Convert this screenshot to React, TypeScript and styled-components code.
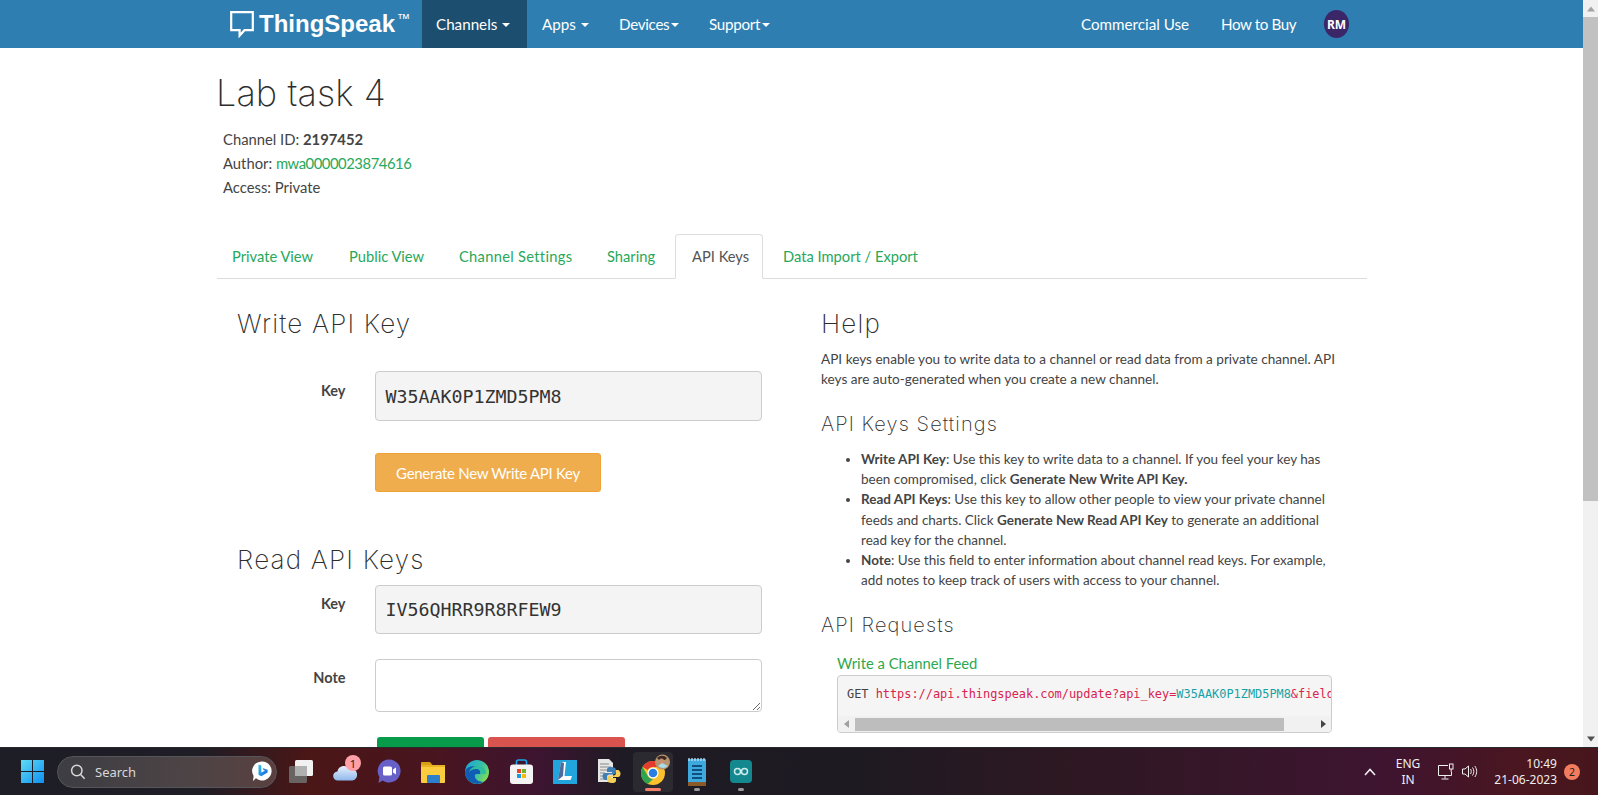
import React from "react";
import styled, { createGlobalStyle } from "styled-components";

const Global = createGlobalStyle`
  html, body { margin: 0; padding: 0; height: 100%; overflow: hidden; background: #fff; }
  body { font-family: "Lato", "Noto Sans", sans-serif; color: #444; }
  #root { height: 100%; }
  * { box-sizing: border-box; }
`;

const Screen = styled.div`
  width: 1598px; height: 795px; display: flex; flex-direction: column; overflow: hidden;
`;
const Viewport = styled.div`
  height: 747px; display: flex; flex: none; overflow: hidden;
`;
const Page = styled.div`
  flex: 1; min-width: 0; overflow: hidden; display: flex; flex-direction: column;
`;
const ScrollTrack = styled.div`
  width: 15px; flex: none; background: #f1f1f1; display: flex; flex-direction: column;
  align-items: stretch;
`;
const ScrollArrow = styled.div`
  height: 17px; flex: none; display: flex; align-items: center; justify-content: center;
`;
const ScrollThumb = styled.div`
  height: 484px; flex: none; background: #c1c1c1;
`;
const ScrollGap = styled.div` flex: 1; `;

const Navbar = styled.nav`
  height: 48px; flex: none; background: #2e7eb2; display: flex; align-items: stretch;
  padding-left: 230px; color: #fff;
`;
const Brand = styled.div`
  width: 192px; display: flex; align-items: center; gap: 5px; flex: none;
`;
const BrandText = styled.span`
  font-family: "Liberation Sans", Arial, sans-serif; font-weight: 700; font-size: 24px; color: #fff;
  white-space: nowrap;
`;
const Tm = styled.sup`
  font-size: 13px; font-weight: 400; vertical-align: 9px; line-height: 0; margin-left: 2px;
`;
const NavItem = styled.div<{ $w: number; $active?: boolean; $tight?: boolean }>`
  width: ${(p) => p.$w}px; flex: none; padding-left: ${(p) => (p.$active ? 14 : 15)}px;
  display: flex; align-items: center; gap: ${(p) => (p.$tight ? 2 : 5)}px; font-size: 15.2px; color: #fff;
  letter-spacing: ${(p) => (p.$tight ? "-0.3px" : "0")};
  background: ${(p) => (p.$active ? "#1c4e6f" : "transparent")};
`;
const NavCaret = styled.i`
  width: 0; height: 0; border-left: 4.5px solid transparent; border-right: 4.5px solid transparent;
  border-top: 4.5px solid #fff; display: block; margin-top: 1px;
`;
const NavSpacer = styled.div` flex: 1; `;
const NavLink = styled.div<{ $w: number; $tight?: boolean }>`
  width: ${(p) => p.$w}px; flex: none; display: flex; align-items: center; font-size: 15.2px; color: #fff;
  letter-spacing: ${(p) => (p.$tight ? "-0.4px" : "0")};
`;
const Avatar = styled.div`
  width: 25px; height: 28px; border-radius: 50%; background: #3b2667; color: #fff; flex: none;
  font: 700 12px "Noto Sans", sans-serif; display: flex; align-items: center; justify-content: center;
  align-self: center; margin-right: 234px;
`;

const Body = styled.main`
  padding-left: 217px; width: 1367px;
`;
const Title = styled.h1`
  margin: 20px 0 0 -1px; height: 50px; line-height: 50px; font-family: "Inter", sans-serif;
  font-weight: 200; font-size: 36px; color: #2e2e2e; letter-spacing: 0.1px;
`;
const Meta = styled.div`
  margin-top: 9px; padding-left: 6px; font-size: 14.8px; color: #444; line-height: 24px;
`;
const MetaLine = styled.div` height: 24px; `;
const GreenLink = styled.a`
  color: #27a85a; text-decoration: none; letter-spacing: -0.45px;
`;
const Tabs = styled.div`
  margin-top: 35px; height: 45px; display: flex; border-bottom: 1px solid #ddd; align-items: stretch;
`;
const Tab = styled.div<{ $w: number; $pad?: number; $active?: boolean; $wide?: boolean }>`
  width: ${(p) => p.$w}px; flex: none; height: 45px; padding-left: ${(p) => p.$pad ?? 15}px; font-size: 14.7px;
  padding-bottom: 1px; white-space: nowrap; letter-spacing: ${(p) => (p.$wide ? "0.3px" : "0")};
  display: flex; align-items: center;
  color: ${(p) => (p.$active ? "#555" : "#27a85a")};
  ${(p) =>
    p.$active
      ? "background:#fff;border:1px solid #ddd;border-bottom-color:#fff;border-radius:4px 4px 0 0;"
      : ""}
`;
const Columns = styled.div`
  display: grid; grid-template-columns: 604px 546px;
`;
const LeftCol = styled.section` padding-left: 20px; `;
const RightCol = styled.section``;
const H2 = styled.h2<{ $top: number }>`
  margin: ${(p) => p.$top}px 0 0; height: 40px; line-height: 40px; font-family: "Inter", sans-serif;
  font-weight: 200; font-size: 26px; color: #2e2e2e; letter-spacing: 1.2px;
`;
const FormRow = styled.div<{ $top: number }>`
  margin-top: ${(p) => p.$top}px; display: grid; grid-template-columns: 108.5px 538px; column-gap: 29px;
  width: 676px;
`;
const Label = styled.label<{ $pad: number }>`
  text-align: right; font-weight: 700; font-size: 14.5px; line-height: 24px; color: #444;
  padding-top: ${(p) => p.$pad}px;
`;
const KeyField = styled.div<{ $h: number }>`
  width: 387px; height: ${(p) => p.$h}px; border: 1px solid #ccc; border-radius: 4px; background: #f4f4f4;
  font-family: "DejaVu Sans Mono", monospace; font-size: 18.3px; color: #333;
  display: flex; align-items: center; padding-left: 10px;
`;
const NoteField = styled.textarea`
  width: 387px; height: 53px; border: 1px solid #ccc; border-radius: 4px; background: #fff; display: block;
  margin: 0; font-family: inherit;
`;
const ButtonRow = styled.div<{ $top: number; $left: number }>`
  margin-top: ${(p) => p.$top}px; margin-left: ${(p) => p.$left}px; display: flex; gap: 4px;
`;
const GenButton = styled.div`
  width: 226px; height: 39px; background: #f0ad4e; border: 1px solid #eea236; border-radius: 3px;
  color: #fff; font-size: 15px; display: flex; align-items: center; justify-content: center;
  letter-spacing: -0.3px;
`;
const ColorButton = styled.div<{ $w: number; $bg: string }>`
  width: ${(p) => p.$w}px; height: 40px; background: ${(p) => p.$bg}; border-radius: 3px;
`;
const HelpP = styled.p`
  margin: 5px 0 0; font-size: 13.6px; line-height: 20px; white-space: nowrap; color: #444;
`;
const H3 = styled.h3<{ $top: number }>`
  margin: ${(p) => p.$top}px 0 0; height: 30px; line-height: 30px; font-family: "Inter", sans-serif;
  font-weight: 200; font-size: 20px; color: #2e2e2e; letter-spacing: 1.1px;
`;
const HelpList = styled.ul`
  margin: 10px 0 0; padding: 0 0 0 40px; font-size: 13.5px; line-height: 20.2px; white-space: nowrap; color: #444;
`;
const FeedTitle = styled.div`
  margin: 12px 0 0 16px; font-size: 14.8px; line-height: 22px; height: 22px; color: #2ea84f;
`;
const CodeBox = styled.div`
  margin: 1px 0 0 16px; width: 495px; height: 58px; border: 1px solid #ccc; border-radius: 4px;
  background: #f5f5f5; display: flex; flex-direction: column; overflow: hidden;
`;
const CodeText = styled.pre`
  margin: 0; flex: 1; overflow: hidden; padding: 8px 0 0 9px; font-family: "DejaVu Sans Mono", monospace;
  font-size: 11.9px; line-height: 20px; color: #444; white-space: pre;
`;
const CodeUrl = styled.span` color: #d9224c; `;
const CodeKey = styled.span` color: #16a3a8; `;
const CodeScroll = styled.div`
  height: 16px; flex: none; background: #f1f1f1; display: flex; align-items: center;
`;
const CodeArrow = styled.div`
  width: 17px; flex: none; display: flex; align-items: center; justify-content: center;
`;
const CodeThumb = styled.div` width: 429px; height: 13px; background: #bdbdbd; flex: none; `;
const CodeGap = styled.div` flex: 1; `;

const Taskbar = styled.footer`
  height: 48px; flex: none; display: flex; align-items: center; position: relative;
  border-top: 1px solid #2a2a2e; color: #fff;
  background: linear-gradient(90deg, #1e1e26 0, #1f1d25 200px, #4b1616 310px, #481520 440px, #3d1430 540px, #1f1b24 620px, #1e1a22 860px, #2d1822 1060px, #3e1430 1380px, #4a1620 1520px, #47161c 1598px);
`;
const StartButton = styled.div`
  width: 57px; flex: none; display: flex; justify-content: center; padding-left: 8px;
`;
const SearchBox = styled.div`
  width: 220px; height: 32px; flex: none; border-radius: 16px; display: flex; align-items: center;
  background: linear-gradient(90deg, #3d3d43, #4d4446 60%, #5a403f);
  padding: 0 4px 0 12px; gap: 9px; border: 1px solid #55555a;
`;
const SearchLabel = styled.span`
  font: 400 13px "Noto Sans", sans-serif; color: #d8d8d8; flex: 1;
`;
const Apps = styled.div`
  display: flex; margin-left: 2px; flex: none; height: 47px;
`;
const Slot = styled.div<{ $active?: boolean }>`
  width: 44px; flex: none; position: relative; display: flex; align-items: center; justify-content: center;
  &::before {
    content: "";
    display: ${(p) => (p.$active ? "block" : "none")};
    position: absolute; left: 2px; top: 4px; width: 40px; height: 40px; border-radius: 4px; background: #2b2a30;
  }
  & > svg { position: relative; }
`;
const Indicator = styled.i<{ $active?: boolean }>`
  position: absolute; left: 50%; bottom: 4px; height: 3px; border-radius: 2px; transform: translateX(-50%);
  width: ${(p) => (p.$active ? 16 : 6)}px; background: ${(p) => (p.$active ? "#f4806a" : "#9a9a9a")};
`;
const Badge = styled.span`
  position: absolute; left: 22px; top: 7px; width: 16px; height: 16px; border-radius: 50%; background: #ffa0a8;
  color: #222; font: 400 11px "Noto Sans", sans-serif; display: flex; align-items: center; justify-content: center;
`;
const Tray = styled.div`
  margin-left: auto; display: flex; align-items: center; height: 47px; flex: none;
`;
const Chevron = styled.div` width: 33px; flex: none; display: flex; justify-content: flex-start; `;
const Lang = styled.div`
  width: 22px; flex: none; font: 400 12px/16px "Noto Sans", sans-serif; color: #eee; text-align: center;
  margin-right: 19px; display: flex; flex-direction: column; align-items: center;
`;
const TrayIcons = styled.div`
  display: flex; gap: 8px; align-items: center; width: 40px; flex: none;
`;
const Clock = styled.div`
  width: 79px; flex: none; font: 400 12px/16px "Noto Sans", sans-serif; color: #eee; text-align: right;
`;
const TrayBadge = styled.div`
  width: 16px; height: 16px; border-radius: 50%; background: #f47c5e; color: #222; flex: none;
  font: 400 10.5px "Noto Sans", sans-serif; display: flex; align-items: center; justify-content: center;
  margin: 0 18px 0 7px;
`;

const Triangle = ({ dir, color = "#555", size = 8 }: { dir: "up" | "down" | "left" | "right"; color?: string; size?: number }) => {
  const pts = { up: "4,1.5 8,6.5 0,6.5", down: "0,1.5 8,1.5 4,6.5", left: "6,0 6,8 1,4", right: "2,0 2,8 7,4" }[dir];
  return (
    <svg width={size} height={size} viewBox="0 0 8 8"><polygon points={pts} fill={color} /></svg>
  );
};

const BubbleIcon = () => (
  <svg width="24" height="28" viewBox="0 0 24 28" fill="none">
    <path d="M1.2 2.2H22.8V20.2H14.5L9.6 25.6V20.2H1.2Z" stroke="#fff" strokeWidth="2.2" />
  </svg>
);
const WindowsIcon = () => (
  <svg width="23" height="23" viewBox="0 0 23 23">
    <defs>
      <linearGradient id="w" x1="0" y1="0" x2="1" y2="1">
        <stop offset="0" stopColor="#5fdcf5" /><stop offset="1" stopColor="#0f8ff0" />
      </linearGradient>
    </defs>
    <path d="M0 0H11V11H0ZM12 0H23V11H12ZM0 12H11V23H0ZM12 12H23V23H12Z" fill="url(#w)" />
  </svg>
);
const SearchIcon = () => (
  <svg width="16" height="16" viewBox="0 0 16 16" fill="none" stroke="#d8d8d8" strokeWidth="1.5">
    <circle cx="6.8" cy="6.5" r="5.2" /><path d="M10.6 10.4L14.6 14.8" />
  </svg>
);
const BingIcon = () => (
  <svg width="20" height="21" viewBox="0 0 20 21">
    <defs>
      <linearGradient id="bi" x1="0" y1="0" x2="1" y2="1">
        <stop offset="0" stopColor="#33c3f0" /><stop offset="1" stopColor="#1a5fe0" />
      </linearGradient>
    </defs>
    <path d="M10 0.5a9.5 9.5 0 1 1-6 16.8L1 20l.6-5A9.5 9.5 0 0 1 10 .5Z" fill="#fff" />
    <path d="M6.500 3.500l2.800 1v7l3.700-1.800-1.600-.8-.8-2 5 1.800v2.800l-6.300 3.800-2.800-1.600Z" fill="url(#bi)" />
  </svg>
);
const TaskViewIcon = () => (
  <svg width="24" height="23" viewBox="0 0 24 23">
    <rect x="6" y="0" width="18" height="16" rx="1.5" fill="#f1f1f1" />
    <rect x="0" y="6" width="18" height="17" rx="1.5" fill="#6a6a6a" fillOpacity="0.93" />
    <rect x="6" y="6" width="12" height="10" fill="#b0b0b0" />
  </svg>
);
const CloudIcon = () => (
  <svg width="24" height="18" viewBox="0 0 24 18">
    <defs>
      <linearGradient id="cl" x1="0" y1="0" x2="0" y2="1">
        <stop offset="0" stopColor="#e8f0fb" /><stop offset="1" stopColor="#8fb8ee" />
      </linearGradient>
    </defs>
    <path d="M5 17.5a4.5 4.5 0 0 1-.6-9A7 7 0 0 1 17 6a5.8 5.8 0 0 1 2.5 11.5Z" fill="url(#cl)" />
  </svg>
);
const MeetIcon = () => (
  <svg width="24" height="25" viewBox="0 0 24 25">
    <path d="M12 .5a11.5 11.5 0 1 1-6.4 21L1.5 24l.9-6A11.5 11.5 0 0 1 12 .5Z" fill="#6660c8" />
    <rect x="6" y="7.5" width="9" height="9" rx="1.5" fill="#fff" />
    <path d="M16 10.5l3-2v7l-3-2Z" fill="#fff" />
  </svg>
);
const FolderIcon = () => (
  <svg width="24" height="24" viewBox="0 0 24 24">
    <path d="M0 3a1 1 0 0 1 1-1h8l2.5 3H0Z" fill="#d89f10" />
    <rect x="0" y="5" width="24" height="18" rx="1" fill="#fbcd3e" />
    <rect x="0" y="5" width="24" height="2" fill="#e8b424" />
    <rect x="6" y="15" width="13" height="8" rx="1" fill="#2c7fcc" />
  </svg>
);
const EdgeIcon = () => (
  <svg width="24" height="24" viewBox="0 0 24 24">
    <defs>
      <linearGradient id="e1" x1="0" y1="0" x2="1" y2="0.6">
        <stop offset="0" stopColor="#1da1d8" /><stop offset="0.6" stopColor="#35c1a8" /><stop offset="1" stopColor="#7fdc5a" />
      </linearGradient>
    </defs>
    <circle cx="12" cy="12" r="12" fill="url(#e1)" />
    <path d="M0 12C1 7 7 5 12 7c4 1.500 5 5 3 7-3 .5-6-1-5 3 .5 3 5 5.500 9 4.500A12 12 0 0 1 0 12Z" fill="#0f5db4" />
    <path d="M11 9c3 0 5 2 4 5h6c1-4-3-8-8-8-5 0-8 3-9 6 2-2 4-3 7-3Z" fill="#2dbf9e" />
  </svg>
);
const StoreIcon = () => (
  <svg width="23" height="25" viewBox="0 0 23 25">
    <path d="M6.500 7V3a2 2 0 0 1 2-2h6a2 2 0 0 1 2 2v4" fill="none" stroke="#19a5e8" strokeWidth="1.600" />
    <rect x="0" y="5.500" width="23" height="19.500" rx="3" fill="#f3f3f3" />
    <rect x="7" y="10" width="4" height="4" fill="#e8452c" />
    <rect x="12" y="10" width="4" height="4" fill="#6fb52c" />
    <rect x="7" y="15" width="4" height="4" fill="#1a9be0" />
    <rect x="12" y="15" width="4" height="4" fill="#f9b90b" />
  </svg>
);
const LIcon = () => (
  <svg width="24" height="24" viewBox="0 0 24 24">
    <rect width="24" height="24" fill="#22a5dc" />
    <path d="M8 2h5l-1.500 14H19l-1.500 4H5Z" fill="#fff" />
    <path d="M8 2l3 1-1 13-5 4Z" fill="#123a7a" fillOpacity="0.75" />
  </svg>
);
const PythonFileIcon = () => (
  <svg width="24" height="25" viewBox="0 0 24 25">
    <path d="M1 0h11l4 4v19H1Z" fill="#e6e6e6" />
    <path d="M3 5h9M3 8h11M3 11h7M3 14h5M3 17h5M3 20h5" stroke="#8a8a8a" strokeWidth="1" />
    <path d="M14 8c-4 0-4 2-4 3v2h5v1H8c-2 0-2.500 2-2.500 3.500S7 21 8 21h2v-3c0-1.500 1-2.500 2.500-2.500h4c1.500 0 2.500-1 2.500-2.500v-2c0-2-2-3-5-3Z" fill="#3f7fb5" />
    <path d="M15 24c4 0 4-2 4-3v-2h-5v-1h7c2 0 2.500-2 2.500-3.500S22 11 21 11h-2v3c0 1.500-1 2.500-2.500 2.500h-4C11 16.500 10 17.500 10 19v2c0 2 2 3 5 3Z" fill="#f4cf5a" />
  </svg>
);
const ChromeSvg = styled.svg`
  margin: -3px 0 0 6px;
`;
const ChromeIcon = () => (
  <ChromeSvg width="30" height="32" viewBox="0 0 30 32">
    <g transform="translate(0 7)">
      <circle cx="12" cy="12" r="12" fill="#fbc02d" />
      <path d="M12 0a12 12 0 0 1 10.400 6H12a6 6 0 0 0-5.200 3L1.600 6A12 12 0 0 1 12 0Z" fill="#e33b2e" />
      <path d="M1.600 6l5.200 9a6 6 0 0 0 5.200 3l-5.200 5A12 12 0 0 1 1.600 6Z" fill="#2ea44f" />
      <circle cx="12" cy="12" r="5.500" fill="#fff" />
      <circle cx="12" cy="12" r="4.300" fill="#2a7de1" />
    </g>
    <circle cx="21.500" cy="8" r="7.500" fill="#b8936f" />
    <path d="M16 4a6.500 6.500 0 0 1 10 0l-2 2h-6Z" fill="#3a2a22" />
    <circle cx="20.500" cy="7" r="2.500" fill="#c89070" />
    <path d="M17 12l4-3 6 3a8 8 0 0 1-10 0Z" fill="#a8dce8" />
  </ChromeSvg>
);
const NotepadIcon = () => (
  <svg width="18" height="28" viewBox="0 0 18 28">
    <rect x="0" y="1" width="18" height="27" rx="1" fill="#3ea9dc" />
    <rect x="0" y="24" width="18" height="4" fill="#8a5a2a" />
    <path d="M1 0v3M4 0v3M7 0v3M10 0v3M13 0v3M16 0v3" stroke="#cfe8f4" strokeWidth="1.200" />
    <path d="M4 8h10M4 12h10M4 16h10M4 20h10" stroke="#0f4f80" strokeWidth="1.800" />
  </svg>
);
const ArduinoIcon = () => (
  <svg width="22" height="23" viewBox="0 0 22 23" fill="none">
    <rect width="22" height="23" rx="4" fill="#14888f" />
    <circle cx="7.500" cy="11.500" r="3" stroke="#cfecec" strokeWidth="1.500" />
    <circle cx="14.500" cy="11.500" r="3" stroke="#cfecec" strokeWidth="1.500" />
  </svg>
);
const ChevronUp = () => (
  <svg width="12" height="8" viewBox="0 0 12 8" fill="none" stroke="#f0f0f0" strokeWidth="1.600">
    <path d="M1 7l5-5.500L11 7" />
  </svg>
);
const MonitorIcon = () => (
  <svg width="16" height="17" viewBox="0 0 16 17" fill="none" stroke="#f0f0f0" strokeWidth="1">
    <path d="M10 2.500H.5v10h13V9" /><path d="M7 12.500v3M3.500 16h7" />
    <rect x="11.500" y="1" width="3.500" height="5" /><path d="M13.200 6v3" />
  </svg>
);
const SpeakerIcon = () => (
  <svg width="16" height="15" viewBox="0 0 16 15" fill="none" stroke="#f0f0f0" strokeWidth="1">
    <path d="M.5 5v5h2.500l3.500 3V2L3 5Z" />
    <path d="M8.500 5c1 1.500 1 3.500 0 5M10.500 3.500c1.800 2.500 1.800 5.500 0 8M12.800 2c2.500 3.500 2.500 7.500 0 11" />
  </svg>
);

export default function App() {
  return (
    <Screen>
      <Global />
      <Viewport>
        <Page>
          <Navbar>
            <Brand>
              <BubbleIcon />
              <BrandText>ThingSpeak<Tm>™</Tm></BrandText>
            </Brand>
            <NavItem $w={105} $active>Channels <NavCaret /></NavItem>
            <NavItem $w={77}>Apps <NavCaret /></NavItem>
            <NavItem $w={90} $tight>Devices<NavCaret /></NavItem>
            <NavItem $w={100} $tight>Support<NavCaret /></NavItem>
            <NavSpacer />
            <NavLink $w={140}>Commercial Use</NavLink>
            <NavLink $w={103} $tight>How to Buy</NavLink>
            <Avatar>RM</Avatar>
          </Navbar>
          <Body>
            <Title>Lab task 4</Title>
            <Meta>
              <MetaLine>Channel ID: <strong>2197452</strong></MetaLine>
              <MetaLine>Author: <GreenLink>mwa0000023874616</GreenLink></MetaLine>
              <MetaLine>Access: Private</MetaLine>
            </Meta>
            <Tabs>
              <Tab $w={117}>Private View</Tab>
              <Tab $w={110}>Public View</Tab>
              <Tab $w={148} $wide>Channel Settings</Tab>
              <Tab $w={83}>Sharing</Tab>
              <Tab $w={88} $pad={16} $active>API Keys</Tab>
              <Tab $w={170} $pad={20}>Data Import / Export</Tab>
            </Tabs>
            <Columns>
              <LeftCol>
                <H2 $top={25}>Write API Key</H2>
                <FormRow $top={27}>
                  <Label $pad={8}>Key</Label>
                  <KeyField $h={50}>W35AAK0P1ZMD5PM8</KeyField>
                </FormRow>
                <ButtonRow $top={32} $left={138}>
                  <GenButton>Generate New Write API Key</GenButton>
                </ButtonRow>
                <H2 $top={48}>Read API Keys</H2>
                <FormRow $top={5}>
                  <Label $pad={7}>Key</Label>
                  <KeyField $h={49}>IV56QHRR9R8RFEW9</KeyField>
                </FormRow>
                <FormRow $top={25}>
                  <Label $pad={7}>Note</Label>
                  <NoteField aria-label="Note" />
                </FormRow>
                <ButtonRow $top={25} $left={140}>
                  <ColorButton $w={107} $bg="#089b4a" />
                  <ColorButton $w={137} $bg="#d9534f" />
                </ButtonRow>
              </LeftCol>
              <RightCol>
                <H2 $top={25}>Help</H2>
                <HelpP>
                  API keys enable you to write data to a channel or read data from a private channel. API<br />
                  keys are auto-generated when you create a new channel.
                </HelpP>
                <H3 $top={20}>API Keys Settings</H3>
                <HelpList>
                  <li>
                    <strong>Write API Key</strong>: Use this key to write data to a channel. If you feel your key has<br />
                    been compromised, click <strong>Generate New Write API Key.</strong>
                  </li>
                  <li>
                    <strong>Read API Keys</strong>: Use this key to allow other people to view your private channel<br />
                    feeds and charts. Click <strong>Generate New Read API Key</strong> to generate an additional<br />
                    read key for the channel.
                  </li>
                  <li>
                    <strong>Note</strong>: Use this field to enter information about channel read keys. For example,<br />
                    add notes to keep track of users with access to your channel.
                  </li>
                </HelpList>
                <H3 $top={20}>API Requests</H3>
                <FeedTitle>Write a Channel Feed</FeedTitle>
                <CodeBox>
                  <CodeText>GET <CodeUrl>https://api.thingspeak.com/update?api_key=</CodeUrl><CodeKey>W35AAK0P1ZMD5PM8</CodeKey><CodeUrl>&amp;field1=0</CodeUrl></CodeText>
                  <CodeScroll>
                    <CodeArrow><Triangle dir="left" color="#a0a0a0" /></CodeArrow>
                    <CodeThumb />
                    <CodeGap />
                    <CodeArrow><Triangle dir="right" color="#444" /></CodeArrow>
                  </CodeScroll>
                </CodeBox>
              </RightCol>
            </Columns>
          </Body>
        </Page>
        <ScrollTrack>
          <ScrollArrow><Triangle dir="up" color="#a3a3a3" /></ScrollArrow>
          <ScrollThumb />
          <ScrollGap />
          <ScrollArrow><Triangle dir="down" color="#505050" /></ScrollArrow>
        </ScrollTrack>
      </Viewport>
      <Taskbar>
        <StartButton><WindowsIcon /></StartButton>
        <SearchBox>
          <SearchIcon />
          <SearchLabel>Search</SearchLabel>
          <BingIcon />
        </SearchBox>
        <Apps>
          <Slot><TaskViewIcon /></Slot>
          <Slot><CloudIcon /><Badge>1</Badge></Slot>
          <Slot><MeetIcon /></Slot>
          <Slot><FolderIcon /></Slot>
          <Slot><EdgeIcon /></Slot>
          <Slot><StoreIcon /></Slot>
          <Slot><LIcon /></Slot>
          <Slot><PythonFileIcon /></Slot>
          <Slot $active><ChromeIcon /><Indicator $active /></Slot>
          <Slot><NotepadIcon /><Indicator /></Slot>
          <Slot><ArduinoIcon /><Indicator /></Slot>
        </Apps>
        <Tray>
          <Chevron><ChevronUp /></Chevron>
          <Lang><span>ENG</span><span>IN</span></Lang>
          <TrayIcons><MonitorIcon /><SpeakerIcon /></TrayIcons>
          <Clock>10:49<br />21-06-2023</Clock>
          <TrayBadge>2</TrayBadge>
        </Tray>
      </Taskbar>
    </Screen>
  );
}
